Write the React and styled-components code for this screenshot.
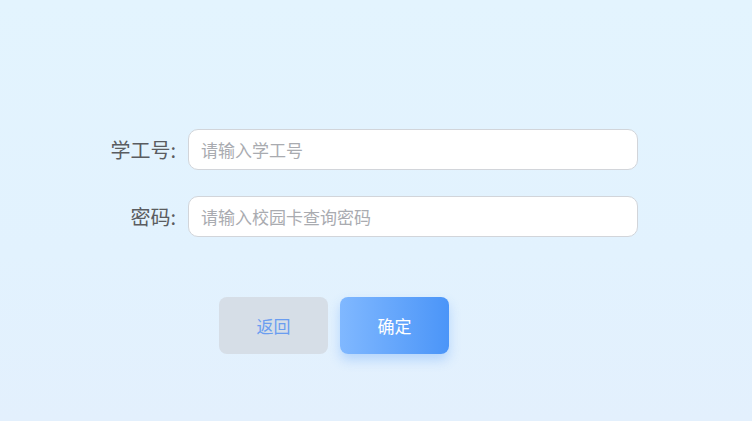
import styled, { createGlobalStyle } from "styled-components";

const GlobalStyle = createGlobalStyle`
  html, body {
    margin: 0;
    padding: 0;
  }
  body {
    font-family: "Noto Sans CJK SC", "Noto Sans", sans-serif;
  }
`;

const Page = styled.div`
  width: 752px;
  height: 421px;
  background: linear-gradient(180deg, #e3f4fe 0%, #e2f2fe 60%, #e3f0fd 100%);
  display: flex;
  justify-content: center;
  padding-top: 129px;
  box-sizing: border-box;
`;

const Form = styled.div`
  display: flex;
  flex-direction: column;
  width: 532px;
`;

const Row = styled.div`
  display: flex;
  align-items: center;
  gap: 12px;
  margin-bottom: ${(props) => props.$mb || 0}px;
`;

const Label = styled.label`
  width: 66px;
  text-align: right;
  font-size: 20px;
  color: #5a5c60;
  white-space: nowrap;
`;

const Input = styled.input`
  width: 450px;
  height: 41px;
  box-sizing: border-box;
  border: 1px solid #d2d5da;
  border-radius: 10px;
  background: #fff;
  padding: 0 12px;
  font-family: "Noto Sans CJK SC", sans-serif;
  font-size: 17px;
  color: #333;
  outline: none;

  &::placeholder {
    color: #a9abb0;
  }
`;

const Buttons = styled.div`
  display: flex;
  gap: 12px;
  padding-left: 109px;
`;

const Button = styled.button`
  width: 109px;
  height: 57px;
  border: none;
  border-radius: 8px;
  font-family: "Noto Sans CJK SC", sans-serif;
  font-size: 17px;
  cursor: pointer;
  background: ${(props) =>
    props.$primary
      ? "linear-gradient(90deg, #80b8ff 0%, #4b95f8 100%)"
      : "#d6dee7"};
  color: ${(props) => (props.$primary ? "#ffffff" : "#6a9df0")};
  box-shadow: ${(props) =>
    props.$primary ? "0 6px 12px rgba(74, 148, 248, 0.3)" : "none"};
`;

const App = () => {
  return (
    <Page>
      <GlobalStyle />
      <Form>
        <Row $mb={26}>
          <Label>学工号:</Label>
          <Input placeholder="请输入学工号" />
        </Row>
        <Row $mb={60}>
          <Label>密码:</Label>
          <Input type="password" placeholder="请输入校园卡查询密码" />
        </Row>
        <Buttons>
          <Button>返回</Button>
          <Button $primary>确定</Button>
        </Buttons>
      </Form>
    </Page>
  );
};

export default App;
